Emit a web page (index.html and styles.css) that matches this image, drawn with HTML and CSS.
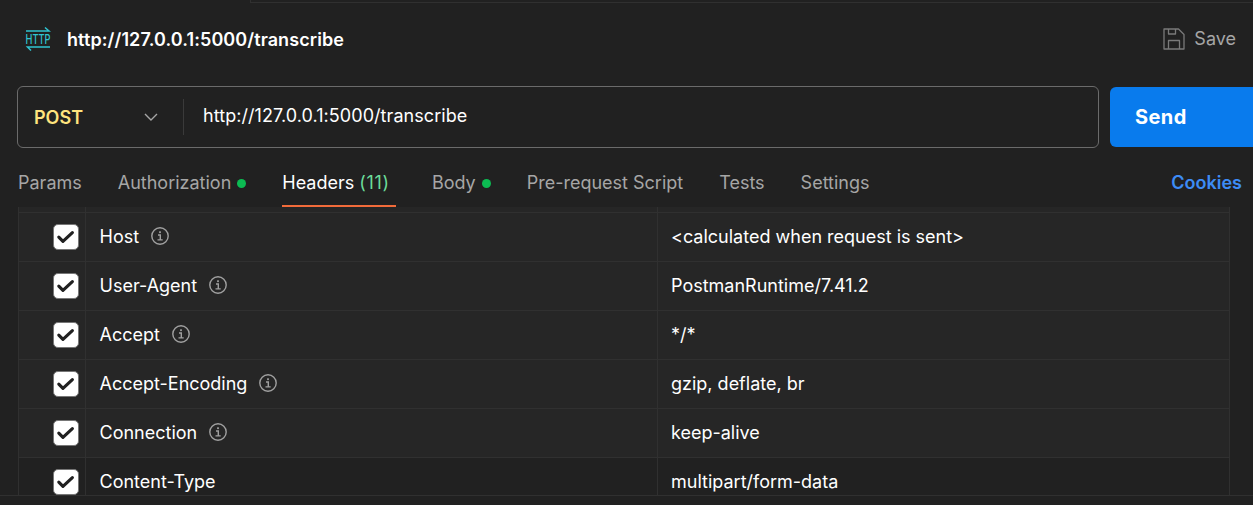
FILE: index.html
```html
<!DOCTYPE html>
<html lang="en">
<head>
<meta charset="utf-8">
<title>Request</title>
<link rel="stylesheet" href="styles.css">
</head>
<body>
<svg width="0" height="0" class="defs">
  <symbol id="check" viewBox="0 0 26 26"><path d="M5.2 13.2l4.5 4.6 10.2-9.6" fill="none" stroke="#212121" stroke-width="3.4" stroke-linecap="round" stroke-linejoin="round"/></symbol>
  <symbol id="info" viewBox="0 0 18 18"><g fill="none" stroke="#a0a0a0" stroke-width="1.4"><circle cx="9" cy="9" r="8.2"/><path d="M7 8h2.3v4.9M6.5 12.9h5.2"/></g><rect x="8.1" y="4.3" width="1.8" height="1.8" fill="#a0a0a0"/></symbol>
</svg>
<div class="app">
  <div class="tabstrip"></div>
  <header class="title-row">
    <svg class="http-icon" viewBox="0 0 26 26">
      <path d="M1 5h23L20 1.500M25 21H2.500L6 24.500" fill="none" stroke="#2fc5d2" stroke-width="1.5"/>
      <text x="0.500" y="18" textLength="25" lengthAdjust="spacingAndGlyphs">HTTP</text>
    </svg>
    <h1 class="title">http://127.0.0.1:5000/transcribe</h1>
    <button class="save">
      <svg class="save-icon" viewBox="0 0 22 22"><path d="M1 1h14.500L21 6.500V21H1zM5.500 1v5h7V1M5.500 21v-8.500h11V21" fill="none" stroke="#7a7a7a" stroke-width="1.3" stroke-linejoin="round"/></svg>
      <span>Save</span>
    </button>
  </header>
  <div class="url-row">
    <div class="url-box">
      <div class="method"><span>POST</span><svg class="chevron" viewBox="0 0 14 8"><path d="M1 1l6 6 6-6" fill="none" stroke="#a6a6a6" stroke-width="1.4"/></svg></div>
      <div class="url">http://127.0.0.1:5000/transcribe</div>
    </div>
    <button class="send">Send</button>
  </div>
  <nav class="tabs">
    <div class="tab">Params</div>
    <div class="tab">Authorization<i class="dot"></i></div>
    <div class="tab active">Headers <span class="count">(11)</span></div>
    <div class="tab">Body<i class="dot"></i></div>
    <div class="tab">Pre-request Script</div>
    <div class="tab">Tests</div>
    <div class="tab">Settings</div>
    <a class="cookies">Cookies</a>
  </nav>
  <div class="table">
    <div class="row stub"><div class="cell pick"></div><div class="cell key"></div><div class="cell"></div></div>
    <div class="row"><div class="cell pick"><svg class="box"><use href="#check"/></svg></div><div class="cell key">Host<svg class="info"><use href="#info"/></svg></div><div class="cell">&lt;calculated when request is sent&gt;</div></div>
    <div class="row"><div class="cell pick"><svg class="box"><use href="#check"/></svg></div><div class="cell key">User-Agent<svg class="info"><use href="#info"/></svg></div><div class="cell">PostmanRuntime/7.41.2</div></div>
    <div class="row"><div class="cell pick"><svg class="box"><use href="#check"/></svg></div><div class="cell key">Accept<svg class="info"><use href="#info"/></svg></div><div class="cell">*/*</div></div>
    <div class="row"><div class="cell pick"><svg class="box"><use href="#check"/></svg></div><div class="cell key">Accept-Encoding<svg class="info"><use href="#info"/></svg></div><div class="cell">gzip, deflate, br</div></div>
    <div class="row"><div class="cell pick"><svg class="box"><use href="#check"/></svg></div><div class="cell key">Connection<svg class="info"><use href="#info"/></svg></div><div class="cell">keep-alive</div></div>
    <div class="row plain"><div class="cell pick"><svg class="box"><use href="#check"/></svg></div><div class="cell key">Content-Type</div><div class="cell">multipart/form-data</div></div>
  </div>
  <footer class="footer"></footer>
</div>
</body>
</html>
```
FILE: styles.css
```css
* { box-sizing: border-box; }
body {
  margin: 0;
  background: #212121;
  color: #fff;
  font: 18px/24px Inter, "Liberation Sans", sans-serif;
}
button { border: 0; background: none; font: inherit; padding: 0; }
.defs { display: block; }
.app { display: flex; flex-direction: column; width: 1253px; height: 505px; overflow: hidden; }
.tabstrip { flex: none; height: 3px; margin-left: 250px; border-bottom: 1px solid #303030; border-left: 1px solid #303030; }
.title-row { flex: none; display: flex; align-items: center; height: 74px; padding: 0 17px 0 25px; }
.http-icon { width: 26px; height: 26px; margin-top: -2px; overflow: visible; }
.http-icon text { font: 500 13.5px/1 Inter, sans-serif; fill: #2fc5d2; }
.title { margin: 0 0 0 16px; font-size: 18px; font-weight: 600; line-height: 24px; letter-spacing: 0.09px; }
.save { display: flex; align-items: center; gap: 9px; margin-left: auto; margin-top: -2px; color: #a6a6a6; }
.save-icon { width: 22px; height: 22px; }
.url-row { flex: none; display: flex; gap: 11px; height: 71px; padding: 9px 0 0 17px; }
.url-box { flex: none; display: flex; align-items: center; width: 1082px; height: 62px; border: 1px solid #6b6b6b; border-radius: 6px; }
.method { display: flex; align-items: center; justify-content: space-between; width: 166px; height: 36px; padding: 0 25px 0 16px; border-right: 1px solid #3a3a3a; color: #ffe47e; font-weight: 600; }
.method span { padding-top: 2px; }
.chevron { width: 14px; height: 8px; }
.url { padding: 0 0 3px 19px; letter-spacing: 0.06px; }
.send { flex: none; width: 150px; height: 60px; margin-top: 1px; padding-left: 25px; border-radius: 6px; background: #097bed; color: #fff; font-size: 20px; font-weight: 700; letter-spacing: 0.4px; text-align: left; }
.tabs { flex: none; display: flex; gap: 36px; height: 60px; padding: 23px 11px 0 18px; color: #a6a6a6; }
.tab { display: flex; align-items: center; height: 24px; white-space: pre; }
.dot { width: 9px; height: 9px; margin: 1px 0 0 6px; border-radius: 50%; background: #0cbb52; }
.tabs .active { height: 36px; padding: 0 6px 10px 0; border-bottom: 2px solid #f26b3a; color: #fff; }
.count { color: #6bdd9a; letter-spacing: 0.7px; }
.cookies { margin-left: auto; color: #3d8cf5; font-weight: 600; }
.table { flex: none; width: 1212px; height: 288px; margin: -1px 0 0 18px; overflow: hidden; border: solid #303030; border-width: 0 1px; }
.row { display: grid; grid-template-columns: 67px 572px 1fr; height: 49px; background: #262626; border-bottom: 1px solid #303030; }
.stub { height: 6px; }
.plain { background: #212121; }
.cell { display: flex; align-items: center; padding-left: 13px; }
.pick, .key { border-right: 1px solid #303030; }
.key { padding-left: 13.5px; }
.pick { padding-left: 34px; }
.box { width: 26px; height: 26px; border: 1px solid #777; border-radius: 5px; background: #fff; }
.info { width: 18px; height: 18px; margin: -2px 0 0 12px; }
.footer { flex: none; height: 10px; border-top: 1px solid #303030; }
```
